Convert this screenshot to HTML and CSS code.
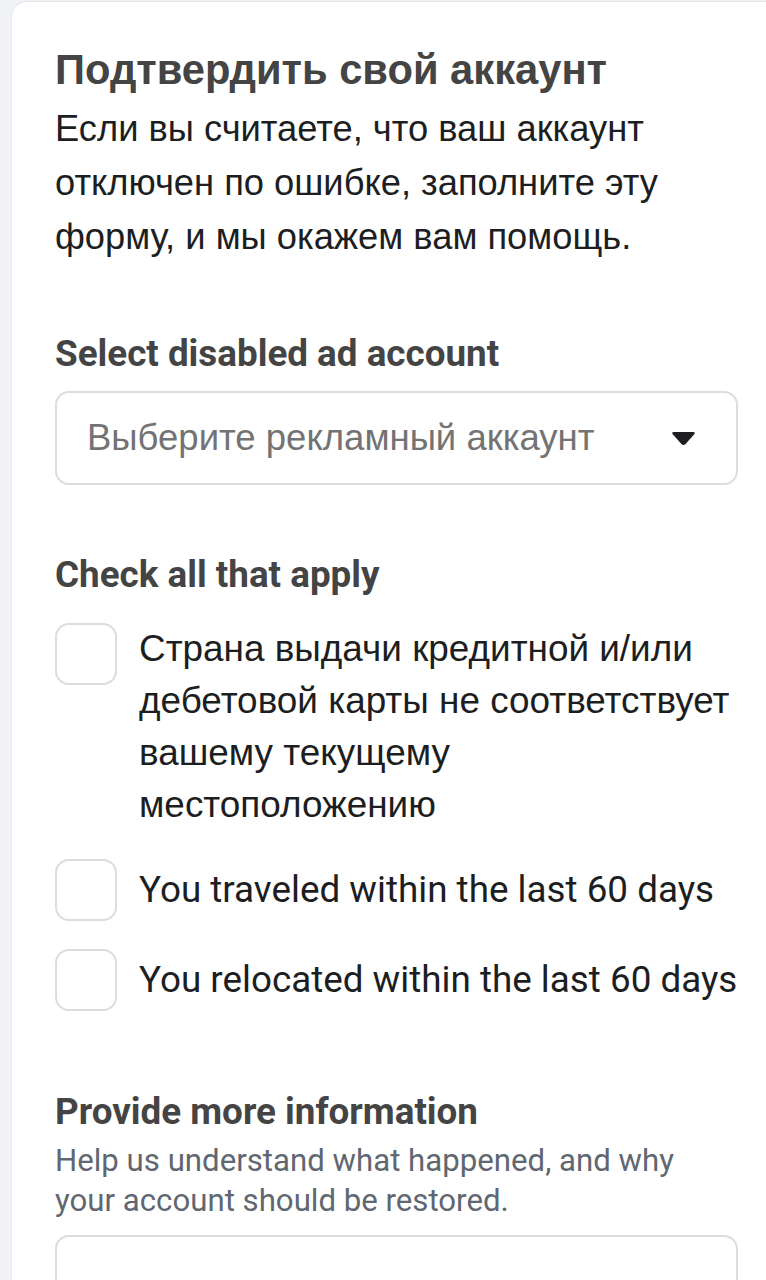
FILE: index.html
```html
<!DOCTYPE html>
<html lang="ru">
<head>
<meta charset="utf-8">
<title>Подтвердить свой аккаунт</title>
<link rel="stylesheet" href="styles.css">
</head>
<body>
<main class="card">
  <h1 class="title">Подтвердить свой аккаунт</h1>
  <p class="intro">Если вы считаете, что ваш аккаунт отключен по ошибке, заполните эту форму, и мы окажем вам помощь.</p>

  <section class="field field-select">
    <div class="label">Select disabled ad account</div>
    <div class="select">
      <span class="placeholder">Выберите рекламный аккаунт</span>
      <svg class="caret" width="25" height="15" viewBox="0 0 25 15" aria-hidden="true">
        <path d="M3 1 H22 Q25 1 23 3.6 L14.6 13 Q12.5 15.2 10.4 13 L2 3.6 Q0 1 3 1 Z" fill="#1c1e21"/>
      </svg>
    </div>
  </section>

  <section class="field field-checks">
    <div class="label">Check all that apply</div>
    <div class="checks">
      <label class="check">
        <span class="box"></span>
        <span class="check-text ru">Страна выдачи кредитной и/или дебетовой карты не соответствует вашему текущему местоположению</span>
      </label>
      <label class="check single">
        <span class="box"></span>
        <span class="check-text en">You traveled within the last 60 days</span>
      </label>
      <label class="check single">
        <span class="box"></span>
        <span class="check-text en">You relocated within the last 60 days</span>
      </label>
    </div>
  </section>

  <section class="field field-info">
    <div class="label">Provide more information</div>
    <p class="help">Help us understand what happened, and why your account should be restored.</p>
    <div class="textarea"></div>
  </section>
</main>
</body>
</html>
```

FILE: styles.css
```css
html, body {
  margin: 0;
  padding: 0;
}

body {
  background: #f0f2f5;
  overflow: hidden;
}

.card {
  margin: 1px 0 0 11px;
  background: #ffffff;
  border-top: 1px solid #e4e6eb;
  border-left: 1px solid #e9ebee;
  border-top-left-radius: 16px;
  padding: 45px 28px 0 43px;
  min-height: 1400px;
  box-sizing: border-box;
}

.title {
  margin: 0;
  font-family: "Liberation Sans", Arial, sans-serif;
  font-weight: 700;
  font-size: 41.7px;
  line-height: 46px;
  color: #444444;
}

.intro {
  margin: 9px 0 0;
  font-family: "Liberation Sans", Arial, sans-serif;
  font-size: 36.3px;
  line-height: 54px;
  color: #1c1e21;
}

.label {
  font-family: Roboto, "Liberation Sans", sans-serif;
  font-weight: 700;
  font-size: 36.8px;
  line-height: 44px;
  color: #444444;
}

.field-select {
  margin-top: 68px;
}

.select {
  margin-top: 15px;
  height: 94px;
  box-sizing: border-box;
  border: 2px solid #dadde1;
  border-radius: 14px;
  display: flex;
  align-items: center;
  justify-content: space-between;
  padding: 0 40px 0 30px;
}

.placeholder {
  font-family: "Liberation Sans", Arial, sans-serif;
  font-size: 36.5px;
  color: #737373;
}

.caret {
  display: block;
}

.field-checks {
  margin-top: 68px;
}

.checks {
  margin-top: 26px;
  display: flex;
  flex-direction: column;
  gap: 28px;
}

.check {
  display: flex;
  align-items: flex-start;
  gap: 22px;
}

.check.single {
  align-items: center;
}

.box {
  flex: 0 0 auto;
  width: 62px;
  height: 62px;
  box-sizing: border-box;
  border: 2px solid #dadde1;
  border-radius: 14px;
}

.check-text {
  color: #1c1e21;
}

.check-text.ru {
  font-family: "Liberation Sans", Arial, sans-serif;
  font-size: 36.9px;
  line-height: 52px;
}

.check-text.en {
  font-family: Roboto, "Liberation Sans", sans-serif;
  font-size: 36.8px;
  line-height: 62px;
}

.field-info {
  margin-top: 79px;
}

.help {
  margin: 7px 0 0;
  font-family: Roboto, "Liberation Sans", sans-serif;
  font-size: 31.2px;
  line-height: 40px;
  color: #606770;
}

.textarea {
  margin-top: 14px;
  height: 160px;
  box-sizing: border-box;
  border: 2px solid #dadde1;
  border-radius: 14px;
}
```
